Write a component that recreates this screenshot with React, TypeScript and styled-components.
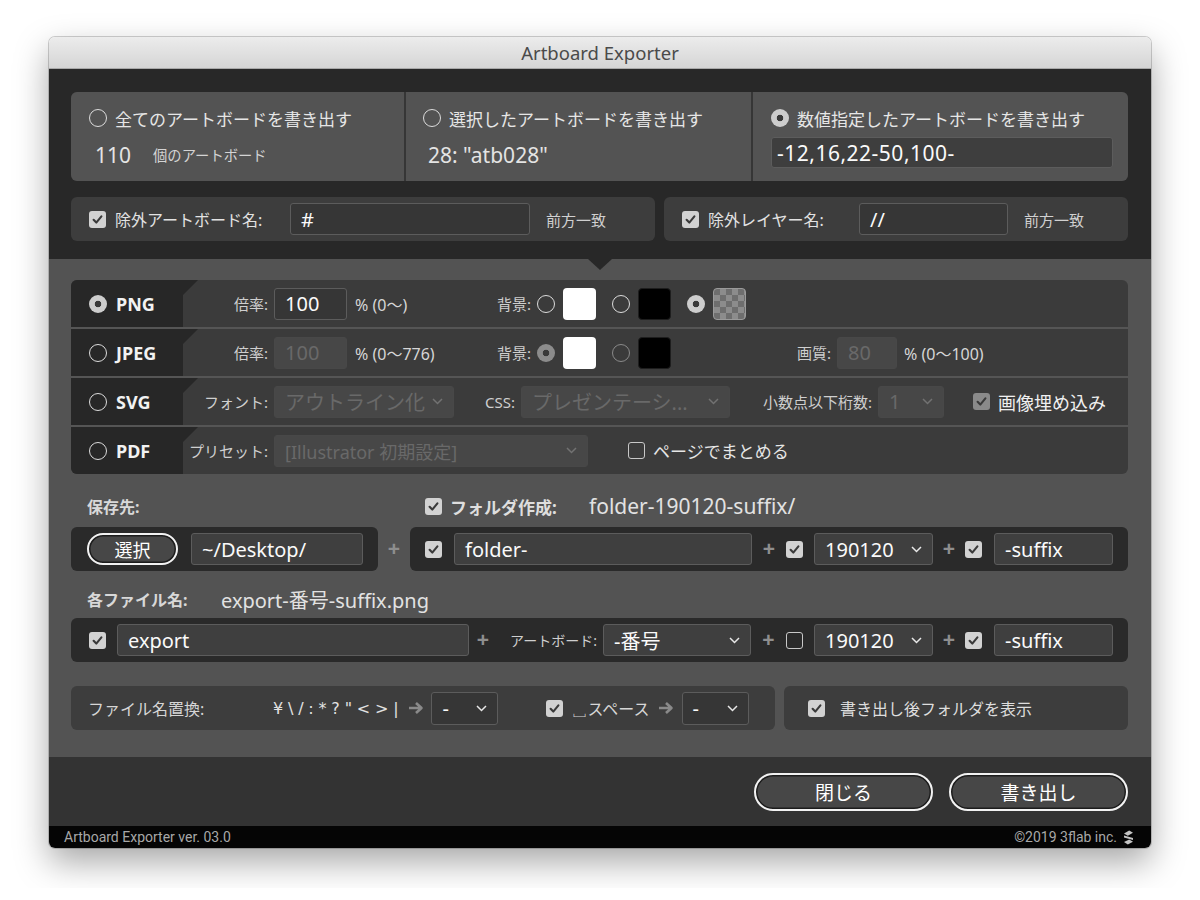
import React from "react";
import styled, { createGlobalStyle, css } from "styled-components";

const FONT = `"Noto Sans", "Noto Sans CJK JP", sans-serif`;

const GlobalStyle = createGlobalStyle`
  html, body { margin: 0; padding: 0; background: #ffffff; }
  body { font-family: ${FONT}; -webkit-font-smoothing: antialiased; }
  * { box-sizing: border-box; }
`;

const Page = styled.div`
  padding: 37px 49px 40px 49px;
`;

const Window = styled.div`
  width: 1102px;
  border-radius: 6px;
  overflow: hidden;
  box-shadow: 0 14px 34px rgba(0, 0, 0, 0.35), 0 0 0 1px rgba(0, 0, 0, 0.18);
`;

const TitleBar = styled.div`
  height: 32px;
  background: linear-gradient(#ececec, #d5d5d5);
  border-bottom: 1px solid #a9a9a9;
  display: flex;
  align-items: center;
  justify-content: center;
  font-family: "Noto Sans", sans-serif;
  font-size: 18.5px;
  color: #4a4a4a;
`;

/* ---------- shared controls ---------- */

const Radio = styled.span<{ $on?: boolean; $dim?: boolean }>`
  width: 18px;
  height: 18px;
  border-radius: 50%;
  flex: 0 0 auto;
  ${(p) =>
    p.$on
      ? css`
          background: radial-gradient(circle, #3a3a3a 0 3px, ${p.$dim ? "#8c8c8c" : "#cdcdcd"} 3.6px);
        `
      : css`
          border: 1.5px solid ${p.$dim ? "#8a8a8a" : "#dcdcdc"};
        `}
`;

const CheckBox = styled.span<{ $on?: boolean; $dim?: boolean }>`
  width: 17px;
  height: 17px;
  border-radius: 3px;
  flex: 0 0 auto;
  display: inline-flex;
  align-items: center;
  justify-content: center;
  ${(p) =>
    p.$on
      ? css`
          background: ${p.$dim ? "#8a8a8a" : "#d2d2d2"};
        `
      : css`
          border: 1.5px solid #c8c8c8;
        `}
`;

const Check = ({ on, dim }: { on?: boolean; dim?: boolean }) => (
  <CheckBox $on={on} $dim={dim}>
    {on && (
      <svg width="13" height="13" viewBox="0 0 13 13">
        <path d="M2.6 6.8 L5.3 9.6 L10.4 3.4" fill="none" stroke="#3a3a3a" strokeWidth="2.1" strokeLinecap="round" strokeLinejoin="round" />
      </svg>
    )}
  </CheckBox>
);

const Field = styled.div<{ $w?: number; $h?: number; $size?: number; $disabled?: boolean; $bg?: string; $px?: number; $ls?: number }>`
  width: ${(p) => (p.$w ? `${p.$w}px` : "auto")};
  flex: ${(p) => (p.$w ? "0 0 auto" : "1 1 auto")};
  height: ${(p) => p.$h ?? 32}px;
  display: flex;
  align-items: center;
  justify-content: space-between;
  padding: 0 ${(p) => p.$px ?? 10}px;
  border-radius: 3px;
  font-size: ${(p) => p.$size ?? 20}px;
  letter-spacing: ${(p) => p.$ls ?? 0}px;
  white-space: nowrap;
  overflow: hidden;
  ${(p) =>
    p.$disabled
      ? css`
          background: #474747;
          border: 1px solid #484848;
          color: #696969;
        `
      : css`
          background: ${p.$bg ?? "#393939"};
          border: 1px solid #5c5c5c;
          color: #fafafa;
        `}
`;

const ChevronSvg = styled.svg<{ $dim?: boolean }>`
  flex: 0 0 auto;
  color: ${(p) => (p.$dim ? "#727272" : "#e8e8e8")};
`;

const Chevron = ({ dim }: { dim?: boolean }) => (
  <ChevronSvg $dim={dim} width="11" height="7" viewBox="0 0 11 7">
    <polyline points="1,1 5.5,5.5 10,1" fill="none" stroke="currentColor" strokeWidth="1.5" />
  </ChevronSvg>
);

const Select = ({
  w,
  h,
  size,
  disabled,
  bg,
  children,
}: {
  w?: number;
  h?: number;
  size?: number;
  disabled?: boolean;
  bg?: string;
  children: React.ReactNode;
}) => (
  <Field $w={w} $h={h} $size={size} $disabled={disabled} $bg={bg}>
    <span>{children}</span>
    <Chevron dim={disabled} />
  </Field>
);

const Plus = styled.span<{ $w: number }>`
  width: ${(p) => p.$w}px;
  flex: 0 0 auto;
  text-align: center;
  font-family: "Liberation Sans", sans-serif;
  font-weight: bold;
  font-size: 21px;
  color: #8e8e8e;
`;

const Text = styled.span<{ $size?: number; $color?: string; $ml?: number; $w?: number; $bold?: boolean; $right?: boolean }>`
  font-size: ${(p) => p.$size ?? 16}px;
  color: ${(p) => p.$color ?? "#d6d6d6"};
  margin-left: ${(p) => p.$ml ?? 0}px;
  font-weight: ${(p) => (p.$bold ? 700 : 400)};
  white-space: nowrap;
  flex: 0 0 auto;
  ${(p) =>
    p.$w &&
    css`
      width: ${p.$w}px;
    `}
  ${(p) =>
    p.$right &&
    css`
      text-align: right;
    `}
`;

/* ---------- top section ---------- */

const TopSection = styled.div`
  position: relative;
  background: #282828;
  padding: 23px 23px 18px 22px;
  display: flex;
  flex-direction: column;
  gap: 16px;
  &::after {
    content: "";
    position: absolute;
    left: 539px;
    bottom: -11px;
    border-left: 12px solid transparent;
    border-right: 12px solid transparent;
    border-top: 11px solid #282828;
    z-index: 2;
  }
`;

const ModePanel = styled.div`
  display: grid;
  grid-template-columns: 333px 345px 1fr;
  column-gap: 2px;
  height: 89px;
  background: #363636;
  border-radius: 6px;
  overflow: hidden;
`;

const ModeCell = styled.div<{ $pl: number }>`
  background: #535353;
  padding: 14px 15px 0 ${(p) => p.$pl}px;
  display: flex;
  flex-direction: column;
`;

const ModeHead = styled.div`
  height: 24px;
  display: flex;
  align-items: center;
  gap: 8px;
  font-size: 17px;
  color: #e6e6e6;
`;

const ModeInfo = styled.div<{ $indent: number; $nudge?: number }>`
  margin-top: 7px;
  height: 31px;
  display: flex;
  align-items: center;
  padding-left: ${(p) => p.$indent}px;
  padding-top: ${(p) => p.$nudge ?? 0}px;
`;

const ExcludeRow = styled.div`
  display: grid;
  grid-template-columns: 584px 1fr;
  column-gap: 9px;
`;

const ExcludePanel = styled.div`
  height: 44px;
  background: #3d3d3d;
  border-radius: 6px;
  display: flex;
  align-items: center;
  padding-left: 18px;
  gap: 9px;
`;

/* ---------- gray section ---------- */

const GraySection = styled.div`
  background: #535353;
  padding: 21px 23px 27px 22px;
  display: flex;
  flex-direction: column;
`;

const FormatPanel = styled.div`
  display: flex;
  flex-direction: column;
  gap: 2px;
  background: #555555;
  border-radius: 6px;
  overflow: hidden;
`;

const FormatRow = styled.div`
  height: 47px;
  background: #3b3b3b;
  display: flex;
  align-items: center;
`;

const FormatName = styled.div`
  position: relative;
  align-self: stretch;
  width: 112px;
  flex: 0 0 auto;
  background: #272727;
  display: flex;
  align-items: center;
  gap: 9px;
  padding-left: 18px;
  font-size: 18px;
  font-weight: 700;
  color: #f2f2f2;
  &::after {
    content: "";
    position: absolute;
    left: 100%;
    top: 0;
    border-top: 15px solid #272727;
    border-right: 15px solid transparent;
  }
`;

const Swatch = styled.span<{ $kind: "white" | "black" | "checker" }>`
  width: 33px;
  height: 32px;
  border-radius: 4px;
  flex: 0 0 auto;
  ${(p) =>
    p.$kind === "white"
      ? css`
          background: #ffffff;
        `
      : p.$kind === "black"
      ? css`
          background: #000000;
          border: 1px solid #1e1e1e;
        `
      : css`
          border: 1px solid #9a9a9a;
          background-color: #6e6e6e;
          background-image: conic-gradient(#8c8c8c 25%, #6e6e6e 0 50%, #8c8c8c 0 75%, #6e6e6e 0);
          background-size: 12px 12px;
        `}
`;

const Group = styled.div<{ $gap: number; $ml?: number; $grow?: boolean }>`
  display: flex;
  align-items: center;
  gap: ${(p) => p.$gap}px;
  margin-left: ${(p) => p.$ml ?? 0}px;
  flex: ${(p) => (p.$grow ? "1 1 auto" : "0 0 auto")};
`;

const FieldLabel = styled.span<{ $w?: number; $mr?: number; $ml?: number; $size?: number }>`
  flex: 0 0 auto;
  ${(p) =>
    p.$w &&
    css`
      width: ${p.$w}px;
      text-align: right;
    `}
  margin-right: ${(p) => p.$mr ?? 6}px;
  margin-left: ${(p) => p.$ml ?? 0}px;
  font-size: ${(p) => p.$size ?? 15}px;
  color: #cfcfcf;
  white-space: nowrap;
`;

const SectionLabelRow = styled.div<{ $top: number }>`
  margin-top: ${(p) => p.$top}px;
  height: 32px;
  display: flex;
  align-items: center;
  padding-left: 16px;
`;

const SaveRow = styled.div<{ $top: number }>`
  margin-top: ${(p) => p.$top}px;
  display: flex;
  align-items: center;
`;

const DarkPanel = styled.div<{ $w?: number; $pl: number }>`
  height: 44px;
  ${(p) =>
    p.$w
      ? css`
          width: ${p.$w}px;
          flex: 0 0 auto;
        `
      : css`
          flex: 1 1 auto;
        `}
  background: #2a2a2a;
  border-radius: 6px;
  display: flex;
  align-items: center;
  padding: 0 15px 0 ${(p) => p.$pl}px;
`;

const PillButton = styled.button<{ $w: number; $h: number; $size: number }>`
  width: ${(p) => p.$w}px;
  height: ${(p) => p.$h}px;
  flex: 0 0 auto;
  border-radius: ${(p) => p.$h / 2}px;
  border: 2px solid #f2f2f2;
  box-shadow: inset 0 0 0 1.5px #1c1c1c;
  background: #474747;
  color: #ffffff;
  font-family: ${FONT};
  font-size: ${(p) => p.$size}px;
  padding: 0;
  display: inline-flex;
  align-items: center;
  justify-content: center;
`;

const OptionRow = styled.div`
  margin-top: 24px;
  display: grid;
  grid-template-columns: 704px 1fr;
  column-gap: 9px;
`;

const OptionPanel = styled.div<{ $pl: number }>`
  height: 44px;
  background: #3d3d3d;
  border-radius: 6px;
  display: flex;
  align-items: center;
  padding-left: ${(p) => p.$pl}px;
`;

const Arrow = styled.span<{ $ml: number; $mr: number }>`
  margin: 0 ${(p) => p.$mr}px 0 ${(p) => p.$ml}px;
  display: inline-flex;
  color: #8a8a8a;
`;

const ArrowIcon = ({ ml, mr }: { ml: number; mr: number }) => (
  <Arrow $ml={ml} $mr={mr}>
    <svg width="16" height="14" viewBox="0 0 16 14">
      <path d="M1 7 H13 M8 2 L13.5 7 L8 12" fill="none" stroke="currentColor" strokeWidth="2.6" strokeLinejoin="round" />
    </svg>
  </Arrow>
);

const Forbidden = styled.span`
  font-size: 16px;
  color: #e2e2e2;
  letter-spacing: 4.8px;
  white-space: nowrap;
  font-family: "DejaVu Sans", "Noto Sans CJK JP", sans-serif;
`;

/* ---------- bottom ---------- */

const ActionBar = styled.div`
  height: 69px;
  background: #333333;
  display: flex;
  align-items: center;
  justify-content: flex-end;
  gap: 16px;
  padding: 0 23px 0 0;
`;

const Footer = styled.div`
  height: 22px;
  background: #050505;
  display: flex;
  align-items: center;
  justify-content: space-between;
  padding: 0 17px 0 15px;
  font-family: "Roboto", sans-serif;
  font-size: 14px;
  color: #a8a8a8;
`;

const FooterRight = styled.div`
  display: flex;
  align-items: center;
  gap: 6px;
`;

const Logo = () => (
  <svg width="11" height="15" viewBox="0 0 11 15">
    <path d="M1 3.4 L6.2 0.6 L10 2.8 L4.8 5.7 Z" fill="#c4c4c4" />
    <path d="M1 5.6 L10 8 L10 10 L1 7.6 Z" fill="#c4c4c4" />
    <path d="M1 12 L6.2 9.6 L10 11.8 L4.8 14.4 Z" fill="#c4c4c4" />
  </svg>
);

export default function App() {
  return (
    <>
      <GlobalStyle />
      <Page>
        <Window>
          <TitleBar>Artboard Exporter</TitleBar>

          <TopSection>
            <ModePanel>
              <ModeCell $pl={18}>
                <ModeHead>
                  <Radio />
                  全てのアートボードを書き出す
                </ModeHead>
                <ModeInfo $indent={6} $nudge={4}>
                  <Text $size={21} $color="#e4e4e4">110</Text>
                  <Text $size={14.3} $color="#d4d4d4" $ml={22}>個のアートボード</Text>
                </ModeInfo>
              </ModeCell>
              <ModeCell $pl={17}>
                <ModeHead>
                  <Radio />
                  選択したアートボードを書き出す
                </ModeHead>
                <ModeInfo $indent={5} $nudge={4}>
                  <Text $size={21} $color="#e4e4e4">28: "atb028"</Text>
                </ModeInfo>
              </ModeCell>
              <ModeCell $pl={18}>
                <ModeHead>
                  <Radio $on />
                  数値指定したアートボードを書き出す
                </ModeHead>
                <ModeInfo $indent={0}>
                  <Field $h={31} $bg="#3e3e3e" $size={21} $px={5} $ls={0.5}>-12,16,22-50,100-</Field>
                </ModeInfo>
              </ModeCell>
            </ModePanel>

            <ExcludeRow>
              <ExcludePanel>
                <Check on />
                <Text $size={16} $color="#e2e2e2" $w={166}>除外アートボード名:</Text>
                <Field $w={240} $bg="#363636">#</Field>
                <Text $size={15} $color="#d0d0d0" $ml={7}>前方一致</Text>
              </ExcludePanel>
              <ExcludePanel>
                <Check on />
                <Text $size={16} $color="#e2e2e2" $w={142}>除外レイヤー名:</Text>
                <Field $w={149} $bg="#363636">//</Field>
                <Text $size={15} $color="#d0d0d0" $ml={7}>前方一致</Text>
              </ExcludePanel>
            </ExcludeRow>
          </TopSection>

          <GraySection>
            <FormatPanel>
              <FormatRow>
                <FormatName>
                  <Radio $on />
                  PNG
                </FormatName>
                <FieldLabel $w={85}>倍率:</FieldLabel>
                <Field $w={73} $bg="#363636">100</Field>
                <Text $ml={8} $w={137}>% (0〜)</Text>
                <FieldLabel $w={39}>背景:</FieldLabel>
                <Group $gap={16}>
                  <Group $gap={8}>
                    <Radio />
                    <Swatch $kind="white" />
                  </Group>
                  <Group $gap={8}>
                    <Radio />
                    <Swatch $kind="black" />
                  </Group>
                  <Group $gap={8}>
                    <Radio $on />
                    <Swatch $kind="checker" />
                  </Group>
                </Group>
              </FormatRow>

              <FormatRow>
                <FormatName>
                  <Radio />
                  JPEG
                </FormatName>
                <FieldLabel $w={85}>倍率:</FieldLabel>
                <Field $w={73} $disabled>100</Field>
                <Text $ml={8} $w={137}>% (0〜776)</Text>
                <FieldLabel $w={39}>背景:</FieldLabel>
                <Group $gap={16}>
                  <Group $gap={8}>
                    <Radio $on $dim />
                    <Swatch $kind="white" />
                  </Group>
                  <Group $gap={8}>
                    <Radio $dim />
                    <Swatch $kind="black" />
                  </Group>
                </Group>
                <FieldLabel $ml={123} $w={37}>画質:</FieldLabel>
                <Field $w={60} $disabled>80</Field>
                <Text $ml={7}>% (0〜100)</Text>
              </FormatRow>

              <FormatRow>
                <FormatName>
                  <Radio />
                  SVG
                </FormatName>
                <FieldLabel $w={85}>フォント:</FieldLabel>
                <Select w={180} disabled>アウトライン化</Select>
                <FieldLabel $w={61}>CSS:</FieldLabel>
                <Select w={209} disabled>プレゼンテーシ...</Select>
                <FieldLabel $w={142}>小数点以下桁数:</FieldLabel>
                <Select w={66} disabled>1</Select>
                <Group $gap={8} $ml={29}>
                  <Check on dim />
                  <Text $size={18} $color="#f0f0f0">画像埋め込み</Text>
                </Group>
              </FormatRow>

              <FormatRow>
                <FormatName>
                  <Radio />
                  PDF
                </FormatName>
                <FieldLabel $w={85}>プリセット:</FieldLabel>
                <Select w={314} size={18} disabled>[Illustrator 初期設定]</Select>
                <Group $gap={8} $ml={40}>
                  <Check />
                  <Text $size={17} $color="#e6e6e6">ページでまとめる</Text>
                </Group>
              </FormatRow>
            </FormatPanel>

            <SectionLabelRow $top={16}>
              <Text $size={16} $bold $color="#d8d8d8" $w={338}>保存先:</Text>
              <Group $gap={8}>
                <Check on />
                <Text $size={17} $bold $color="#dedede" $w={139}>フォルダ作成:</Text>
              </Group>
              <Text $size={21} $color="#e2e2e2">folder-190120-suffix/</Text>
            </SectionLabelRow>

            <SaveRow $top={5}>
              <DarkPanel $w={307} $pl={16}>
                <PillButton $w={91} $h={32} $size={18}>選択</PillButton>
                <Group $gap={0} $ml={13} $grow>
                  <Field $bg="#3f3f3f">~/Desktop/</Field>
                </Group>
              </DarkPanel>
              <Plus $w={32}>+</Plus>
              <DarkPanel $pl={15}>
                <Check on />
                <Group $gap={0} $ml={12}>
                  <Field $w={298} $bg="#3f3f3f">folder-</Field>
                </Group>
                <Plus $w={34}>+</Plus>
                <Check on />
                <Group $gap={0} $ml={11}>
                  <Select w={119} bg="#3f3f3f">190120</Select>
                </Group>
                <Plus $w={32}>+</Plus>
                <Check on />
                <Group $gap={0} $ml={12}>
                  <Field $w={119} $bg="#3f3f3f">-suffix</Field>
                </Group>
              </DarkPanel>
            </SaveRow>

            <SectionLabelRow $top={12}>
              <Text $size={16} $bold $color="#d8d8d8" $w={134}>各ファイル名:</Text>
              <Text $size={20} $color="#e2e2e2">export-番号-suffix.png</Text>
            </SectionLabelRow>

            <SaveRow $top={3}>
              <DarkPanel $pl={18}>
                <Check on />
                <Group $gap={0} $ml={11}>
                  <Field $w={352} $bg="#3f3f3f">export</Field>
                </Group>
                <Plus $w={28}>+</Plus>
                <FieldLabel $ml={8} $w={92} $size={14}>アートボード:</FieldLabel>
                <Select w={148} bg="#3f3f3f">-番号</Select>
                <Plus $w={35}>+</Plus>
                <Check />
                <Group $gap={0} $ml={11}>
                  <Select w={119} bg="#3f3f3f">190120</Select>
                </Group>
                <Plus $w={32}>+</Plus>
                <Check on />
                <Group $gap={0} $ml={12}>
                  <Field $w={119} $bg="#3f3f3f">-suffix</Field>
                </Group>
              </DarkPanel>
            </SaveRow>

            <OptionRow>
              <OptionPanel $pl={17}>
                <Text $size={16} $color="#d6d6d6" $w={185}>ファイル名置換:</Text>
                <Forbidden>¥\/:*?"&lt;&gt;|</Forbidden>
                <ArrowIcon ml={5} mr={7} />
                <Select w={67} h={33} bg="#363636">-</Select>
                <Group $gap={8} $ml={48}>
                  <Check on />
                  <Text $size={16} $color="#d6d6d6">␣スペース</Text>
                </Group>
                <ArrowIcon ml={8} mr={8} />
                <Select w={67} h={33} bg="#363636">-</Select>
              </OptionPanel>
              <OptionPanel $pl={24}>
                <Group $gap={15}>
                  <Check on />
                  <Text $size={16} $color="#dedede">書き出し後フォルダを表示</Text>
                </Group>
              </OptionPanel>
            </OptionRow>
          </GraySection>

          <ActionBar>
            <PillButton $w={179} $h={38} $size={19}>閉じる</PillButton>
            <PillButton $w={179} $h={38} $size={19}>書き出し</PillButton>
          </ActionBar>

          <Footer>
            <span>Artboard Exporter ver. 03.0</span>
            <FooterRight>
              <span>©2019 3flab inc.</span>
              <Logo />
            </FooterRight>
          </Footer>
        </Window>
      </Page>
    </>
  );
}
